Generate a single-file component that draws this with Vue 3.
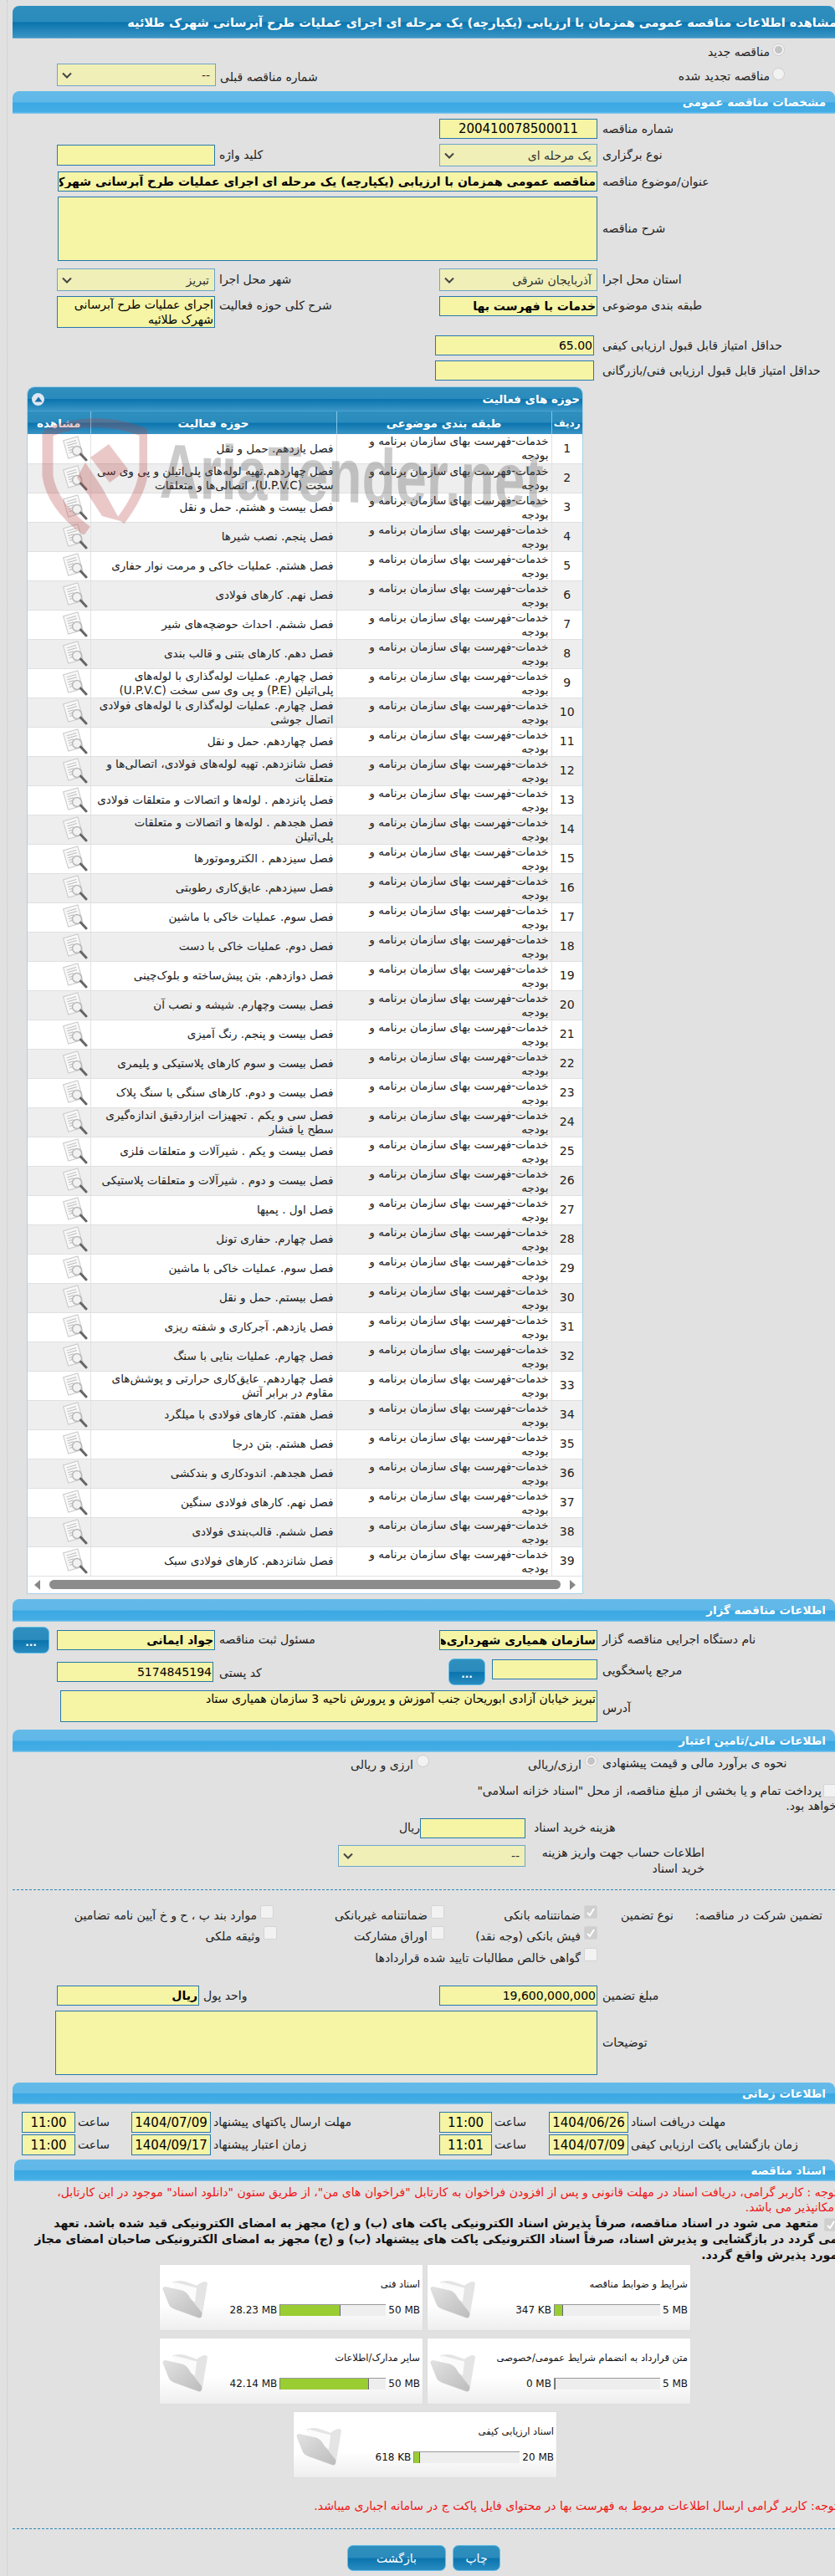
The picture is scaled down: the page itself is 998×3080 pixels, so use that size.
<script setup>
const serviceText = 'خدمات-فهرست بهای سازمان برنامه و بودجه'

const activities = [
  'فصل یازدهم. حمل و نقل',
  'فصل چهاردهم.تهیه لوله‌های پلی‌اتیلن و پی وی سی سخت (U.P.V.C)، اتصالی‌ها و متعلقات',
  'فصل بیست و هشتم. حمل و نقل',
  'فصل پنجم. نصب شیرها',
  'فصل هشتم. عملیات خاکی و مرمت نوار حفاری',
  'فصل نهم. کارهای فولادی',
  'فصل ششم. احداث حوضچه‌های شیر',
  'فصل دهم. کارهای بتنی و قالب بندی',
  'فصل چهارم. عملیات لوله‌گذاری با لوله‌های پلی‌اتیلن (P.E) و پی وی سی سخت (U.P.V.C)',
  'فصل چهارم. عملیات لوله‌گذاری با لوله‌های فولادی اتصال جوشی',
  'فصل چهاردهم. حمل و نقل',
  'فصل شانزدهم. تهیه لوله‌های فولادی، اتصالی‌ها و متعلقات',
  'فصل پانزدهم . لوله‌ها و اتصالات و متعلقات فولادی',
  'فصل هجدهم . لوله‌ها و اتصالات و متعلقات پلی‌اتیلن',
  'فصل سیزدهم . الکتروموتورها',
  'فصل سیزدهم. عایق‌کاری رطوبتی',
  'فصل سوم. عملیات خاکی با ماشین',
  'فصل دوم. عملیات خاکی با دست',
  'فصل دوازدهم. بتن پیش‌ساخته و بلوک‌چینی',
  'فصل بیست وچهارم. شیشه و نصب آن',
  'فصل بیست و پنجم. رنگ آمیزی',
  'فصل بیست و سوم کارهای پلاستیکی و پلیمری',
  'فصل بیست و دوم. کارهای سنگی با سنگ پلاک',
  'فصل سی و یکم . تجهیزات ابزاردقیق اندازه‌گیری سطح یا فشار',
  'فصل بیست و یکم . شیرآلات و متعلقات فلزی',
  'فصل بیست و دوم . شیرآلات و متعلقات پلاستیکی',
  'فصل اول . پمپها',
  'فصل چهارم. حفاری تونل',
  'فصل سوم. عملیات خاکی با ماشین',
  'فصل بیستم. حمل و نقل',
  'فصل یازدهم. آجرکاری و شفته ریزی',
  'فصل چهارم. عملیات بنایی با سنگ',
  'فصل چهاردهم. عایق‌کاری حرارتی و پوشش‌های مقاوم در برابر آتش',
  'فصل هفتم. کارهای فولادی با میلگرد',
  'فصل هشتم. بتن درجا',
  'فصل هجدهم. اندودکاری و بندکشی',
  'فصل نهم. کارهای فولادی سنگین',
  'فصل ششم. قالب‌بندی فولادی',
  'فصل شانزدهم. کارهای فولادی سبک'
]

// کارت فایل‌ها
const files = [
  { title: 'شرایط و ضوابط مناقصه', max: '5 MB', used: '347 KB', pct: 8 },
  { title: 'اسناد فنی', max: '50 MB', used: '28.23 MB', pct: 57 },
  { title: 'متن قرارداد به انضمام شرایط عمومی/خصوصی', max: '5 MB', used: '0 MB', pct: 0 },
  { title: 'سایر مدارک/اطلاعات', max: '50 MB', used: '42.14 MB', pct: 84 },
  { title: 'اسناد ارزیابی کیفی', max: '20 MB', used: '618 KB', pct: 5 }
]
</script>

<template>
  <div class="page" dir="rtl">
    <div class="title-bar"><span class="title-text">مشاهده اطلاعات مناقصه عمومی همزمان با ارزیابی (یکپارچه) یک مرحله ای اجرای عملیات طرح آبرسانی شهرک طلائیه</span></div>

    <div class="radio-row first">
      <span class="radio on"></span><span class="lbl">مناقصه جدید</span>
    </div>
    <div class="radio-row second">
      <span class="radio"></span><span class="lbl">مناقصه تجدید شده</span>
      <div class="prev">
        <span class="lbl">شماره مناقصه قبلی</span>
        <div class="sel">
          <span>--</span>
          <svg width="12" height="8" viewBox="0 0 12 8"><path d="M1 1.5 L6 6.5 L11 1.5" fill="none" stroke="#444" stroke-width="2" /></svg>
        </div>
      </div>
    </div>

    <div class="section first-sec">مشخصات مناقصه عمومی</div>

    <div class="row mt6">
      <label class="lbl">شماره مناقصه</label>
      <input class="inp center" readonly value="200410078500011" />
    </div>
    <div class="row mt6 mid">
      <label class="lbl">نوع برگزاری</label>
      <div class="sel">
        <span>یک مرحله ای</span>
        <svg width="12" height="8" viewBox="0 0 12 8"><path d="M1 1.5 L6 6.5 L11 1.5" fill="none" stroke="#444" stroke-width="2" /></svg>
      </div>
      <label class="lbl second-lbl">کلید واژه</label>
      <input class="inp tall" readonly />
    </div>
    <div class="row-wide mt6">
      <label class="lbl">عنوان/موضوع مناقصه</label>
      <input class="inp bold wide" readonly value="مناقصه عمومی همزمان با ارزیابی (یکپارچه) یک مرحله ای اجرای عملیات طرح آبرسانی شهرک طلائیه" />
    </div>
    <div class="row-wide mt6">
      <label class="lbl">شرح مناقصه</label>
      <textarea class="area wide h77" readonly></textarea>
    </div>
    <div class="row mt9 mid">
      <label class="lbl">استان محل اجرا</label>
      <div class="sel">
        <span>آذربایجان شرقی</span>
        <svg width="12" height="8" viewBox="0 0 12 8"><path d="M1 1.5 L6 6.5 L11 1.5" fill="none" stroke="#444" stroke-width="2" /></svg>
      </div>
      <label class="lbl second-lbl">شهر محل اجرا</label>
      <div class="sel">
        <span>تبریز</span>
        <svg width="12" height="8" viewBox="0 0 12 8"><path d="M1 1.5 L6 6.5 L11 1.5" fill="none" stroke="#444" stroke-width="2" /></svg>
      </div>
    </div>
    <div class="row mt6 top">
      <label class="lbl">طبقه بندی موضوعی</label>
      <input class="inp bold" readonly value="خدمات با فهرست بها" />
      <label class="lbl second-lbl">شرح کلی حوزه فعالیت</label>
      <textarea class="area scope" readonly>اجرای عملیات طرح آبرسانی شهرک طلائیه</textarea>
    </div>
    <div class="row-score mt9">
      <label class="lbl">حداقل امتیاز قابل قبول ارزیابی کیفی</label>
      <input class="inp" readonly value="65.00" />
    </div>
    <div class="row-score mt6">
      <label class="lbl">حداقل امتیاز قابل قبول ارزیابی فنی/بازرگانی</label>
      <input class="inp" readonly />
    </div>

    <div class="panel">
      <div class="panel-head">
        <span>حوزه های فعالیت</span>
        <span class="collapse"><svg width="10" height="7" viewBox="0 0 10 7"><path d="M5 0.5 L9.5 6.5 L0.5 6.5 Z" fill="#1b6fa3" /></svg></span>
      </div>
      <table class="grid">
        <colgroup>
          <col class="c-num" />
          <col class="c-type" />
          <col class="c-area" />
          <col class="c-view" />
        </colgroup>
        <thead>
          <tr>
            <th>ردیف</th>
            <th>طبقه بندی موضوعی</th>
            <th>حوزه فعالیت</th>
            <th>مشاهده</th>
          </tr>
        </thead>
        <tbody>
          <tr v-for="(item, i) in activities" :key="i">
            <td class="num">{{ i + 1 }}</td>
            <td class="type">{{ serviceText }}</td>
            <td>{{ item }}</td>
            <td class="view">
              <svg width="32" height="31" viewBox="0 0 32 31">
                <g transform="rotate(-16 13 13)">
                  <rect x="4" y="3" width="18" height="22" fill="#f8f8f8" stroke="#c8c8c8" />
                  <path d="M7 7 H19 M7 10 H19 M7 13 H14 M7 16 H11 M7 19 H12" stroke="#bcbcbc" stroke-width="1" />
                </g>
                <circle cx="18" cy="18" r="5.5" fill="#f0f0f0" fill-opacity="0.8" stroke="#b8b8b8" stroke-width="1.5" />
                <path d="M22.5 22 L29 29" stroke="#666" stroke-width="3" stroke-linecap="round" />
              </svg>
            </td>
          </tr>
        </tbody>
      </table>
      <div class="hscroll" dir="ltr">
        <span class="arrow left"></span>
        <span class="thumb"></span>
        <span class="arrow right"></span>
      </div>
    </div>

    <div class="section org-sec">اطلاعات مناقصه گزار</div>
    <div class="row org-row mid">
      <label class="lbl">نام دستگاه اجرایی مناقصه گزار</label>
      <input class="inp bold" readonly value="سازمان همیاری شهرداری‌های آذربایجان شرقی" />
      <label class="lbl second-lbl">مسئول ثبت مناقصه</label>
      <input class="inp bold" readonly value="جواد ایمانی" />
      <button class="gloss-btn dots outer">...</button>
    </div>
    <div class="row org-row2">
      <label class="lbl">مرجع پاسخگویی</label>
      <div class="ref">
        <input class="inp ref-inp" readonly />
        <button class="gloss-btn dots">...</button>
      </div>
      <label class="lbl second-lbl">کد پستی</label>
      <input class="inp post" readonly value="5174845194" />
    </div>
    <div class="row-wide addr">
      <label class="lbl">آدرس</label>
      <textarea class="area addr-area" readonly>تبریز خیابان آزادی ابوریحان جنب آموزش و پرورش ناحیه 3 سازمان همیاری ستاد</textarea>
    </div>

    <div class="section fin-sec">اطلاعات مالی/تامین اعتبار</div>
    <div class="fin-radios">
      <span class="lbl fin-l">نحوه ی برآورد مالی و قیمت پیشنهادی</span>
      <span class="opt fin-a"><span class="radio on"></span><span class="lbl">ارزی/ریالی</span></span>
      <span class="opt"><span class="radio"></span><span class="lbl">ارزی و ریالی</span></span>
    </div>
    <p class="islamic"><span class="check inline"></span>پرداخت تمام و یا بخشی از مبلغ مناقصه، از محل "اسناد خزانه اسلامی" خواهد بود.</p>
    <div class="fee">
      <label class="lbl fee-l">هزینه خرید اسناد</label>
      <input class="inp fee-inp" readonly />
      <span class="lbl">ریال</span>
    </div>
    <div class="account">
      <label class="lbl account-l">اطلاعات حساب جهت واریز هزینه خرید اسناد</label>
      <div class="sel account-sel">
        <span>--</span>
        <svg width="12" height="8" viewBox="0 0 12 8"><path d="M1 1.5 L6 6.5 L11 1.5" fill="none" stroke="#444" stroke-width="2" /></svg>
      </div>
    </div>
    <div class="dash d1"></div>

    <div class="guarantee">
      <span class="lbl g-intro">تضمین شرکت در مناقصه:</span>
      <span class="lbl g-type">نوع تضمین</span>
      <span class="opt"><span class="check on"><svg width="12" height="12" viewBox="0 0 12 12"><path d="M2 7 L5 10 L10 2" fill="none" stroke="#fff" stroke-width="2" /></svg></span><span class="lbl">ضمانتنامه بانکی</span></span>
      <span class="opt"><span class="check"></span><span class="lbl">ضمانتنامه غیربانکی</span></span>
      <span class="opt"><span class="check"></span><span class="lbl">موارد بند پ ، ح و خ آیین نامه تضامین</span></span>

      <span></span><span></span>
      <span class="opt"><span class="check on"><svg width="12" height="12" viewBox="0 0 12 12"><path d="M2 7 L5 10 L10 2" fill="none" stroke="#fff" stroke-width="2" /></svg></span><span class="lbl">فیش بانکی (وجه نقد)</span></span>
      <span class="opt"><span class="check"></span><span class="lbl">اوراق مشارکت</span></span>
      <span class="opt shift"><span class="check"></span><span class="lbl">وثیقه ملکی</span></span>

      <span></span><span></span>
      <span class="opt span3"><span class="check"></span><span class="lbl">گواهی خالص مطالبات تایید شده قراردادها</span></span>
    </div>

    <div class="row amount mid">
      <label class="lbl">مبلغ تضمین</label>
      <input class="inp" readonly value="19,600,000,000" />
      <label class="lbl second-lbl">واحد پول</label>
      <input class="inp bold" readonly value="ریال" />
    </div>
    <div class="row-wide mt6">
      <label class="lbl">توضیحات</label>
      <textarea class="area desc" readonly></textarea>
    </div>

    <div class="section time-sec">اطلاعات زمانی</div>
    <div class="times">
      <label class="lbl">مهلت دریافت اسناد</label>
      <input class="inp tm" readonly value="1404/06/26" />
      <label class="lbl">ساعت</label>
      <input class="inp tm" readonly value="11:00" />
      <label class="lbl">مهلت ارسال پاکتهای پیشنهاد</label>
      <input class="inp tm" readonly value="1404/07/09" />
      <label class="lbl">ساعت</label>
      <input class="inp tm" readonly value="11:00" />

      <label class="lbl">زمان بازگشایی پاکت ارزیابی کیفی</label>
      <input class="inp tm" readonly value="1404/07/09" />
      <label class="lbl">ساعت</label>
      <input class="inp tm" readonly value="11:01" />
      <label class="lbl">زمان اعتبار پیشنهاد</label>
      <input class="inp tm" readonly value="1404/09/17" />
      <label class="lbl">ساعت</label>
      <input class="inp tm" readonly value="11:00" />
    </div>

    <div class="section docs-sec">اسناد مناقصه</div>
    <p class="red-note">توجه : کاربر گرامی، دریافت اسناد در مهلت قانونی و پس از افزودن فراخوان به کارتابل "فراخوان های من"، از طریق ستون "دانلود اسناد" موجود در این کارتابل، امکانپذیر می باشد.</p>
    <p class="commit"><span class="check on inline"><svg width="12" height="12" viewBox="0 0 12 12"><path d="M2 7 L5 10 L10 2" fill="none" stroke="#fff" stroke-width="2" /></svg></span> متعهد می شود در اسناد مناقصه، صرفاً پذیرش اسناد الکترونیکی پاکت های (ب) و (ج) مجهز به امضای الکترونیکی قید شده باشد. تعهد<br />می گردد در بازگشایی و پذیرش اسناد، صرفاً اسناد الکترونیکی پاکت های پیشنهاد (ب) و (ج) مجهز به امضای الکترونیکی صاحبان امضای مجاز<br />مورد پذیرش واقع گردد.</p>

    <div class="cards">
      <div v-for="f in files" :key="f.title" class="card">
        <div class="card-body">
          <div class="card-title">{{ f.title }}</div>
          <div class="bar-row">
            <span dir="ltr">{{ f.max }}</span>
            <span class="bar" dir="ltr"><span class="fill" :style="{ width: f.pct + '%' }"></span></span>
            <span dir="ltr">{{ f.used }}</span>
          </div>
        </div>
        <svg class="folder" width="54" height="47" viewBox="0 0 155 135">
          <defs>
            <linearGradient id="fold" x1="0" y1="0" x2="1" y2="1">
              <stop offset="0" stop-color="#e2e2e2" />
              <stop offset="1" stop-color="#bcbcbc" />
            </linearGradient>
          </defs>
          <path d="M35 10 Q60 0 90 12 L118 22 Q150 0 155 15 L137 122 L125 132 Z" fill="#e4e4e4" />
          <path d="M40 10 L118 30 L112 78 L42 44 Z" fill="#fbfbfb" />
          <path d="M3 36 Q0 25 15 28 L70 40 Q85 45 95 65 L135 115 Q138 135 125 133 L40 102 Q25 96 22 85 Z" fill="url(#fold)" stroke="#c8c8c8" />
        </svg>
      </div>
    </div>

    <p class="red-bottom">توجه: کاربر گرامی ارسال اطلاعات مربوط به فهرست بها در محتوای فایل پاکت ج در سامانه اجباری میباشد.</p>
    <div class="dash d2"></div>

    <div class="actions">
      <button class="gloss-btn act print">چاپ</button>
      <button class="gloss-btn act back">بازگشت</button>
    </div>

    <!-- واترمارک روی جدول -->
    <div class="watermark" dir="ltr">
      <svg class="shield" width="126" height="140" viewBox="0 0 126 140">
        <path d="M4 20 Q62 -6 122 18 L122 62 Q120 90 94 124" fill="none" stroke="#b83c3c" stroke-width="11" />
        <path d="M7 18 L7 70 Q12 105 54 136" fill="none" stroke="#b83c3c" stroke-width="13" />
        <path d="M58 48 L80 32 L103 62 L81 78 Z" fill="#b83c3c" />
        <path d="M52 54 L72 84 L94 124 L72 118 L42 72 Z" fill="#b83c3c" />
      </svg>
      <span class="mark-text">AriaTender.net</span>
    </div>
  </div>
</template>

<style scoped>
.page {
  position: relative;
  box-sizing: border-box;
  width: 990px;
  height: 3080px;
  margin-left: 8px;
  padding-left: 6px;
  padding-top: 7px;
  background: #e1e1e1;
  border-left: 1px dotted #c8c8c8;
  overflow: hidden;
  font-family: "DejaVu Sans", "Noto Sans", sans-serif;
  font-size: 14px;
  color: #111;
}

.title-bar {
  height: 39px;
  line-height: 40px;
  border-radius: 8px 8px 0 0;
  border-bottom: 1px solid #63a9d3;
  box-sizing: border-box;
  background: linear-gradient(#2f90bf 0, #2a8bbc 50%, #0a74ad 52%, #3a95c5 100%);
  color: #fff;
  font-weight: bold;
  font-size: 14.5px;
  white-space: nowrap;
  text-align: right;
  overflow: hidden;
}
.title-text {
  display: inline-block;
  margin-right: -2px;
}

.radio-row {
  display: flex;
  align-items: flex-start;
  padding-right: 60px;
  box-sizing: border-box;
}
.radio-row.first { height: 30px; padding-top: 6px; }
.radio-row.second { height: 27px; }
.radio-row.second > .radio { margin-top: 5px; }
.radio-row.second > .lbl { margin-top: 5px; }
.radio-row > .lbl { margin-right: 3px; padding-top: 1px; }
.prev {
  display: flex;
  align-items: center;
  gap: 5px;
  margin-right: auto;
  margin-left: 53px;
}
.prev .lbl { margin-top: 5px; }

.lbl {
  font-size: 14px;
  line-height: 19px;
  color: #222;
}

.radio {
  display: inline-block;
  flex: none;
  width: 13px;
  height: 13px;
  border: 1px solid #ccc;
  border-radius: 50%;
  background: #f2f2f2;
  position: relative;
}
.radio.on::after {
  content: '';
  position: absolute;
  top: 2px;
  left: 2px;
  width: 9px;
  height: 9px;
  border-radius: 50%;
  background: #c4c4c4;
}

.check {
  display: inline-flex;
  flex: none;
  width: 14px;
  height: 14px;
  border: 1px solid #d4d4d4;
  border-radius: 2px;
  background: #f2f2f2;
  align-items: center;
  justify-content: center;
}
.check.on { background: #cfcfcf; }
.check.inline { vertical-align: -3px; margin-left: 2px; }

.section {
  height: 27px;
  box-sizing: border-box;
  line-height: 26px;
  padding-right: 11px;
  border-radius: 8px 8px 0 0;
  background: linear-gradient(#63bae9 0, #60b8e8 48%, #3ba8e3 52%, #45ade5 92%, #8fcdee 100%);
  color: #fff;
  font-weight: bold;
  font-size: 13.5px;
}
.first-sec { margin-top: 6px; }
.org-sec { margin-top: 7px; }
.fin-sec { margin-top: 9px; }
.time-sec { margin-top: 9px; height: 26px; }
.docs-sec { margin-top: 5px; margin-left: 2px; height: 26px; }

.row {
  display: grid;
  grid-template-columns: 284px 189px 268px 189px 1fr;
}
.row-wide {
  display: grid;
  grid-template-columns: 284px 645px;
  align-items: center;
}
.row-score {
  display: grid;
  grid-template-columns: 288px 190px;
  align-items: center;
}
.mt6 { margin-top: 6px; }
.mt9 { margin-top: 9px; }
.row > .lbl:first-child,
.row-wide > .lbl:first-child {
  text-align: left;
  padding-left: 6px;
}
.row-score > .lbl:first-child {
  text-align: left;
  padding-left: 10px;
}
.row > .lbl { align-self: center; }
.row.mid { align-items: center; }
.row.top { align-items: start; }
.row.top > .lbl { align-self: start; padding-top: 2px; }
.second-lbl { text-align: left; padding-left: 5px; }

.inp {
  box-sizing: border-box;
  height: 24px;
  width: 100%;
  padding: 0 1px;
  border: 1px solid #2878ad;
  border-radius: 0;
  background: #f6f4a5;
  color: #000;
  font-family: inherit;
  font-size: 14px;
  text-align: right;
  outline: none;
}
.inp.center { text-align: center; font-size: 15px; }
.inp.tall { height: 25px; }
.inp.bold { font-weight: bold; }
.inp.wide { width: 645px; }

.area {
  display: block;
  box-sizing: border-box;
  padding: 0 1px;
  border: 1px solid #2878ad;
  border-radius: 0;
  background: #f6f4a5;
  color: #000;
  font-family: inherit;
  font-size: 14px;
  line-height: 18px;
  resize: none;
  outline: none;
  overflow: hidden;
}
.area.wide { width: 645px; }
.h77 { height: 77px; }
.scope { width: 189px; height: 38px; }
.addr-area { width: 642px; height: 38px; }
.desc { width: 648px; height: 77px; }

.sel {
  box-sizing: border-box;
  display: flex;
  align-items: center;
  justify-content: space-between;
  height: 27px;
  padding: 0 6px 0 5px;
  border: 1px solid #6ba5cb;
  background: #f0efb7;
  color: #333;
  font-size: 14px;
}
.prev .sel { width: 190px; }

.panel {
  width: 663px;
  margin: 8px auto 0 18px;
  background: #fff;
  border-radius: 8px 8px 0 0;
  box-shadow: 0 0 0 1px #a9d0e8;
}
.panel-head {
  display: flex;
  justify-content: space-between;
  align-items: center;
  height: 29px;
  padding: 0 3px 0 5px;
  border-radius: 8px 8px 0 0;
  border-bottom: 1px solid #4aa0cf;
  box-sizing: border-box;
  background: linear-gradient(#2f90bf 0, #2a8bbc 48%, #0a74ad 52%, #3a95c5 100%);
  color: #fff;
  font-weight: bold;
  font-size: 13.5px;
}
.collapse {
  display: flex;
  align-items: center;
  justify-content: center;
  width: 15px;
  height: 15px;
  border-radius: 50%;
  background: #dfe7f3;
}

.grid {
  width: 663px;
  table-layout: fixed;
  border-collapse: collapse;
}
.c-num { width: 37px; }
.c-type { width: 257px; }
.c-area { width: 294px; }
.c-view { width: 75px; }
.grid th {
  height: 27px;
  padding: 0;
  background: linear-gradient(#2f90bf 0, #2a8bbc 48%, #0a74ad 52%, #3a95c5 100%);
  border-left: 1px solid #83c6e9;
  color: #fff;
  font-size: 13.5px;
  font-weight: bold;
  box-sizing: border-box;
  white-space: nowrap;
}
.grid th:first-child { font-size: 12px; }
.grid th:last-child { border-left: none; }
.grid td {
  height: 35px;
  padding: 0 3px;
  box-sizing: border-box;
  border-left: 1px solid #e2e2e2;
  border-bottom: 1px solid #e0e0e0;
  font-size: 13.5px;
  line-height: 17px;
  color: #222;
  vertical-align: middle;
}
.grid td.type { padding-left: 12px; }
.grid td:last-child { border-left: none; }
.grid tbody tr:nth-child(even) td { background: #eee; }
.grid td.num { text-align: center; font-size: 14px; padding: 0; }
.grid td.view { padding: 0; }
.grid td.view svg { display: block; margin: 0 2px 0 auto; }

.hscroll {
  display: flex;
  align-items: center;
  justify-content: space-between;
  height: 20px;
  padding: 0 8px;
  box-sizing: border-box;
}
.thumb {
  width: 611px;
  height: 11px;
  border-radius: 6px;
  background: #8c8c8c;
}
.arrow {
  width: 0;
  height: 0;
  border-top: 6px solid transparent;
  border-bottom: 6px solid transparent;
}
.arrow.left { border-right: 7px solid #888; }
.arrow.right { border-left: 7px solid #888; }

.gloss-btn {
  box-sizing: border-box;
  border: 1px solid #63bde9;
  border-radius: 7px;
  padding: 0;
  background: linear-gradient(#2f90bf 0, #2a8bbc 48%, #0a74ad 52%, #2a8cc0 100%);
  color: #fff;
  font-family: inherit;
  font-weight: bold;
}
.gloss-btn.dots {
  width: 44px;
  height: 32px;
  font-size: 12px;
  padding-top: 6px;
}
.org-row { margin-top: 6px; }
.outer { justify-self: end; }
.org-row2 { margin-top: 6px; height: 31px; align-items: start; }
.org-row2 > .lbl { align-self: start; padding-top: 5px; }
.org-row2 > .second-lbl { padding-top: 8px; }
.ref { display: flex; gap: 8px; align-items: flex-start; }
.ref-inp { width: 126px; flex: none; margin-top: 1px; }
.post { width: 187px; margin-top: 4px; justify-self: start; margin-right: 2px; }
.addr { margin-top: 7px; }
.addr .lbl { padding-top: 6px; }

.fin-radios {
  display: flex;
  height: 24px;
  align-items: center;
  margin-top: 2px;
}
.fin-l {
  width: 284px;
  flex: none;
  box-sizing: border-box;
  padding-left: 6px;
  text-align: left;
}
.opt { display: flex; gap: 4px; align-items: flex-start; }
.opt .lbl { padding-top: 3px; white-space: nowrap; }
.fin-a { width: 201px; flex: none; }
.islamic {
  width: 462px;
  margin: 11px -2px 0 0;
  font-size: 14px;
  line-height: 18px;
  color: #222;
}
.fee {
  display: flex;
  align-items: center;
  margin-top: 6px;
}
.fee-l {
  width: 370px;
  flex: none;
  box-sizing: border-box;
  padding-left: 10px;
  text-align: left;
}
.fee-inp { width: 126px; flex: none; }
.account {
  display: flex;
  align-items: flex-start;
  margin-top: 8px;
}
.account-l {
  width: 204px;
  flex: none;
  margin: 0 156px 0 10px;
}
.account-sel { width: 224px; height: 26px; }
.dash { border-top: 1px dashed #2b87b5; height: 0; }
.d1 { margin-top: 15px; }
.d2 { margin-top: 18px; }

.guarantee {
  display: grid;
  grid-template-columns: 183px 101px 183px 204px auto;
  grid-auto-rows: 25.5px;
  margin-top: 18px;
  align-items: start;
}
.g-intro { padding-right: 15px; padding-top: 3px; white-space: nowrap; }
.g-type { padding-right: 10px; padding-top: 3px; white-space: nowrap; }
.guarantee .opt .lbl { padding-top: 0; margin-top: 3px; }
.shift { margin-right: -4px; }
.span3 { grid-column: 3 / span 3; }

.amount {
  margin-top: 20px;
  grid-template-columns: 284px 189px 287px 170px 1fr;
}

.times {
  display: grid;
  grid-template-columns: 247px 95px 68px 63px 273px 95px 67px 64px;
  row-gap: 2px;
  margin-top: 9px;
  align-items: center;
}
.times .lbl { text-align: left; padding-left: 3px; white-space: nowrap; }
.inp.tm { text-align: center; height: 25px; padding: 0; font-size: 15px; }

.red-note {
  margin: 4px -3px 0 0;
  padding: 0 0 0 20px;
  font-size: 14px;
  line-height: 18px;
  color: #f01414;
}
.commit {
  margin: 1px -3px 0 0;
  padding: 0;
  font-size: 14px;
  font-weight: bold;
  line-height: 18.5px;
  color: #111;
  white-space: nowrap;
}

.cards {
  display: flex;
  flex-wrap: wrap;
  justify-content: center;
  gap: 8px 4px;
  width: 640px;
  margin: 2px 170px 0 0;
}
.card {
  display: flex;
  justify-content: space-between;
  width: 316px;
  height: 80px;
  box-sizing: border-box;
  padding: 0 3px;
  background: linear-gradient(#fff 0, #fff 60%, #eeeeee 100%);
  border: 1px solid #ddd;
}
.card-body { flex: 1; min-width: 0; }
.card-title {
  margin-top: 14px;
  font-size: 11.5px;
  line-height: 18px;
  white-space: nowrap;
}
.bar-row {
  display: flex;
  align-items: center;
  gap: 3px;
  margin-top: 15px;
  font-size: 12px;
  white-space: nowrap;
}
.bar {
  display: block;
  width: 127px;
  height: 14px;
  flex: none;
  box-sizing: border-box;
  background: #eee;
  border-top: 1px solid #999;
  border-left: 1px solid #888;
}
.fill {
  display: block;
  height: 100%;
  background: #9acd32;
  border-right: 1px solid #667;
  box-sizing: border-box;
}
.folder { flex: none; margin-top: 17px; }

.red-bottom {
  margin: 24px -3px 0 0;
  font-size: 14px;
  line-height: 18px;
  color: #f01414;
}
.actions {
  display: flex;
  justify-content: center;
  gap: 8px;
  margin-top: 19px;
}
.gloss-btn.act {
  height: 31px;
  font-size: 14px;
  font-weight: normal;
}
.print { width: 57px; }
.back { width: 118px; }

.watermark {
  position: absolute;
  left: 41px;
  top: 499px;
  width: 640px;
  height: 140px;
  pointer-events: none;
}
.shield {
  position: absolute;
  left: 0;
  top: 0;
  opacity: 0.28;
}
.mark-text {
  position: absolute;
  left: 141px;
  top: 14px;
  font-family: "Liberation Sans", sans-serif;
  font-weight: bold;
  font-size: 92px;
  line-height: 100px;
  color: #555;
  opacity: 0.3;
  white-space: nowrap;
  transform-origin: left center;
  transform: scaleX(0.72) rotate(1deg);
}
</style>

<style>
html, body { margin: 0; background: #e1e1e1; }
</style>
